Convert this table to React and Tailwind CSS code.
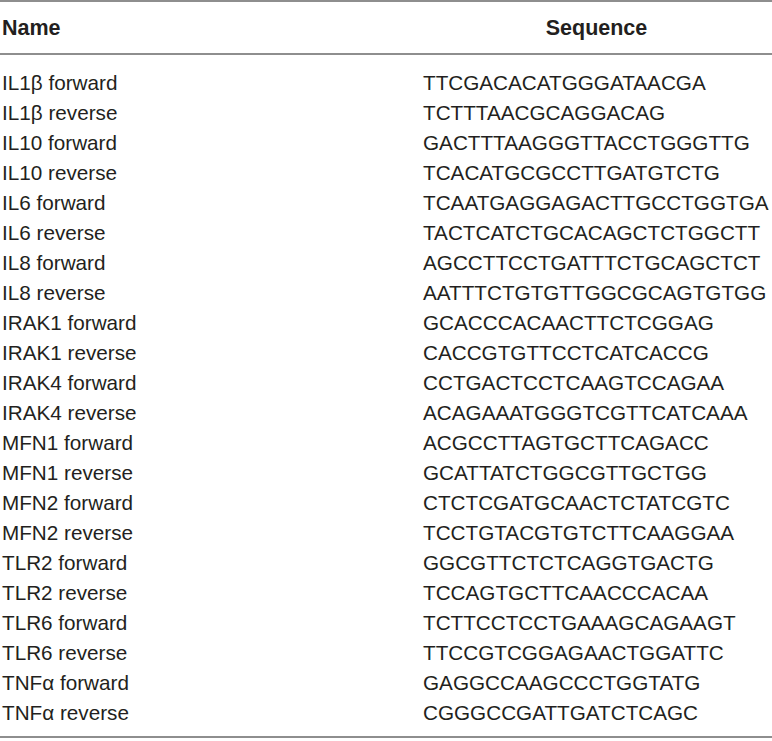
import React from 'react'

const ROWS = [
  ['IL1β forward', 'TTCGACACATGGGATAACGA'],
  ['IL1β reverse', 'TCTTTAACGCAGGACAG'],
  ['IL10 forward', 'GACTTTAAGGGTTACCTGGGTTG'],
  ['IL10 reverse', 'TCACATGCGCCTTGATGTCTG'],
  ['IL6 forward', 'TCAATGAGGAGACTTGCCTGGTGA'],
  ['IL6 reverse', 'TACTCATCTGCACAGCTCTGGCTT'],
  ['IL8 forward', 'AGCCTTCCTGATTTCTGCAGCTCT'],
  ['IL8 reverse', 'AATTTCTGTGTTGGCGCAGTGTGG'],
  ['IRAK1 forward', 'GCACCCACAACTTCTCGGAG'],
  ['IRAK1 reverse', 'CACCGTGTTCCTCATCACCG'],
  ['IRAK4 forward', 'CCTGACTCCTCAAGTCCAGAA'],
  ['IRAK4 reverse', 'ACAGAAATGGGTCGTTCATCAAA'],
  ['MFN1 forward', 'ACGCCTTAGTGCTTCAGACC'],
  ['MFN1 reverse', 'GCATTATCTGGCGTTGCTGG'],
  ['MFN2 forward', 'CTCTCGATGCAACTCTATCGTC'],
  ['MFN2 reverse', 'TCCTGTACGTGTCTTCAAGGAA'],
  ['TLR2 forward', 'GGCGTTCTCTCAGGTGACTG'],
  ['TLR2 reverse', 'TCCAGTGCTTCAACCCACAA'],
  ['TLR6 forward', 'TCTTCCTCCTGAAAGCAGAAGT'],
  ['TLR6 reverse', 'TTCCGTCGGAGAACTGGATTC'],
  ['TNFα forward', 'GAGGCCAAGCCCTGGTATG'],
  ['TNFα reverse', 'CGGGCCGATTGATCTCAGC'],
]

export default function App() {
  return (
    <div className="w-[772px] h-[741px] bg-white text-[#231f20]" style={{ fontFamily: '"Liberation Sans", Arial, sans-serif' }}>
      <div className="border-t-2 border-b-2 border-[#8e8e8e]">
        {/* header */}
        <div className="grid grid-cols-[421px_1fr] h-[53px] items-center border-b-2 border-[#8e8e8e] text-[21.5px] font-bold">
          <div className="pl-[2px] pt-[2px]">Name</div>
          <div className="text-center pt-[2px]">Sequence</div>
        </div>

        {/* body */}
        <div className="pt-[13px] pb-[8px]">
          {ROWS.map(([name, seq]) => (
            <div key={name} className="grid grid-cols-[421px_1fr] h-[30px] items-center text-[20.7px] leading-[30px]">
              <div className="pl-[2px]">{name}</div>
              <div className="pl-[2px]">{seq}</div>
            </div>
          ))}
        </div>
      </div>
    </div>
  )
}
